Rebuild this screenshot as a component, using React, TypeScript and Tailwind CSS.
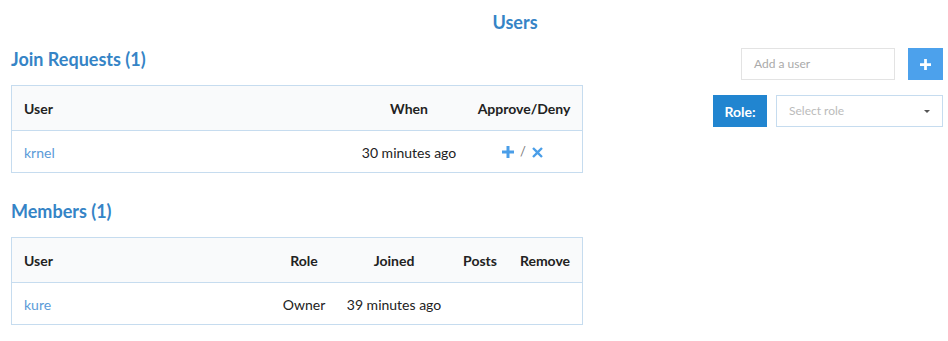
import React from "react";

const Plus = ({ s = 12, c = "currentColor" }: { s?: number; c?: string }) => (
  <svg width={s} height={s} viewBox="0 0 12 12">
    <path d="M4.5 0h3v4.5H12v3H7.5V12h-3V7.5H0v-3h4.5z" fill={c} />
  </svg>
);

const Times = ({ s = 11, c = "currentColor" }: { s?: number; c?: string }) => (
  <svg width={s} height={s} viewBox="0 0 12 12">
    <path d="M2 0.2L6 4.2 10 0.2 11.8 2 7.8 6 11.8 10 10 11.8 6 7.8 2 11.8 0.2 10 4.2 6 0.2 2z" fill={c} />
  </svg>
);

export default function App() {
  return (
    <div className="w-[948px] h-[341px] bg-white text-[#222] overflow-hidden" style={{ fontFamily: "Lato, 'Open Sans', sans-serif" }}>
      <div className="pt-[11px] pl-[82px] text-center text-[18px] leading-[22px] font-bold text-[#3584c6]">Users</div>
      <div className="flex mt-[15px]">
        <div className="ml-[11px] w-[572px]">
          <h2 className="text-[18px] leading-[22px] font-bold text-[#3584c6]">Join Requests (1)</h2>
          <div className="mt-[15px] border border-[#c6dcef] text-[14px]">
            <div className="grid grid-cols-[1fr_116px_116px] h-[45px] items-center bg-[#f9fafb] font-bold border-b border-[#c6dcef]">
              <div className="pl-[12px]">User</div>
              <div className="text-center pl-[2px]">When</div>
              <div className="text-center">Approve/Deny</div>
            </div>
            <div className="grid grid-cols-[1fr_116px_116px] h-[41px] items-center pt-[1px]">
              <div className="pl-[12px] text-[#5b9bd8]">krnel</div>
              <div className="text-center whitespace-nowrap pl-[2px]">30 minutes ago</div>
              <div className="flex items-center justify-center gap-[6px] pr-[3px]">
                <Plus s={12} c="#4a9ee8" />
                <span className="text-[#777] text-[13px]">/</span>
                <Times s={11} c="#4a9ee8" />
              </div>
            </div>
          </div>
          <h2 className="mt-[27px] text-[18px] leading-[22px] font-bold text-[#3584c6]">Members (1)</h2>
          <div className="mt-[15px] border border-[#c6dcef] text-[14px]">
            <div className="grid grid-cols-[1fr_62px_118px_54px_76px] h-[45px] items-center bg-[#f9fafb] font-bold border-b border-[#c6dcef]">
              <div className="pl-[12px]">User</div>
              <div className="text-center pl-[2px]">Role</div>
              <div className="text-center pl-[2px]">Joined</div>
              <div className="text-center pl-[2px]">Posts</div>
              <div className="text-center pl-[2px]">Remove</div>
            </div>
            <div className="grid grid-cols-[1fr_62px_118px_54px_76px] h-[41px] items-center pt-[1px]">
              <div className="pl-[12px] text-[#5b9bd8]">kure</div>
              <div className="text-center pl-[2px]">Owner</div>
              <div className="text-center whitespace-nowrap pl-[2px]">39 minutes ago</div>
              <div></div>
              <div></div>
            </div>
          </div>
        </div>
        <div className="flex-1 flex flex-col items-end pr-[5px]">
          <div className="flex items-center gap-[13px]">
            <div className="w-[154px] h-[32px] border border-[#e3e3e3] flex items-center pl-[12px] text-[12px] text-[#aaa]">Add a user</div>
            <div className="w-[35px] h-[32px] bg-[#4ca1ec] flex items-center justify-center">
              <Plus s={11} c="#fff" />
            </div>
          </div>
          <div className="flex items-center gap-[9px] mt-[15px]">
            <div className="w-[54px] h-[32px] bg-[#2185d0] text-white font-bold text-[14px] flex items-center justify-center">Role:</div>
            <div className="w-[167px] h-[32px] border border-[#c6dcef] flex items-center justify-between pl-[12px] pr-[12px] text-[12px] text-[#bbb]">
              <span>Select role</span>
              <svg width="6" height="3" viewBox="0 0 6 3"><path d="M0 0h6L3 3z" fill="#555" /></svg>
            </div>
          </div>
        </div>
      </div>
    </div>
  );
}
